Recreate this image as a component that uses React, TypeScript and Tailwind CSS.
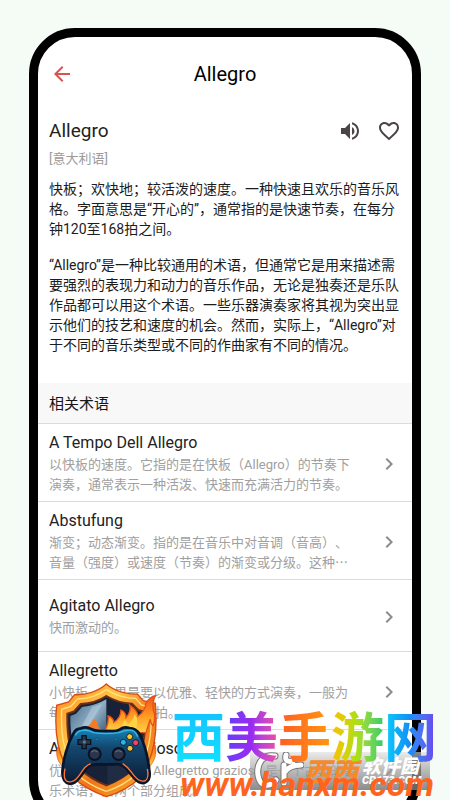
import React from "react";
import { MdArrowBack, MdChevronRight, MdFavoriteBorder, MdVolumeUp } from "react-icons/md";

type Term = { title: string; description: string };

const terms: Term[] = [
  { title: "A Tempo Dell Allegro", description: "以快板的速度。它指的是在快板（Allegro）的节奏下演奏，通常表示一种活泼、快速而充满活力的节奏。" },
  { title: "Abstufung", description: "渐变；动态渐变。指的是在音乐中对音调（音高）、音量（强度）或速度（节奏）的渐变或分级。这种⋯" },
  { title: "Agitato Allegro", description: "快而激动的。" },
  { title: "Allegretto", description: "小快板，这里是要以优雅、轻快的方式演奏，一般为每分钟约 112-120 拍。" },
  { title: "Allegretto grazioso", description: "优雅的稍小快板。Allegretto grazioso 是一个古典的音乐术语，由两个部分组成。" },
];

function TermRow({ title, description }: Term) {
  return (
    <li className="border-b border-[#dcdcdc]">
      <button type="button" className="flex min-h-[71px] w-full items-center justify-between pt-[9px] pr-[11px] pb-[6px] pl-[11px] text-left">
        <span className="flex w-[310px] flex-col gap-[2px]">
          <span className="text-base leading-5 text-[#222]">{title}</span>
          <span className="line-clamp-2 text-[13px] leading-5 text-[#a0a0a0]">{description}</span>
        </span>
        <MdChevronRight className="size-6 shrink-0 text-[#8c8c8c]" />
      </button>
    </li>
  );
}

function ShieldLogo() {
  return (
    <svg viewBox="0 0 348 360" className="h-[120px] w-[116px] shrink-0" aria-hidden="true">
      <defs>
        <linearGradient id="rim" x1="0" y1="0" x2="1" y2="1">
          <stop offset="0" stopColor="#ff8a1c" />
          <stop offset=".35" stopColor="#ffc64a" />
          <stop offset=".6" stopColor="#f0711a" />
          <stop offset="1" stopColor="#ffb52e" />
        </linearGradient>
        <linearGradient id="steel" x1="0" y1="0" x2="1" y2="1">
          <stop offset="0" stopColor="#456887" />
          <stop offset=".5" stopColor="#8eb0c5" />
          <stop offset="1" stopColor="#20344c" />
        </linearGradient>
        <linearGradient id="pad" x1="0" y1="0" x2="0" y2="1">
          <stop offset="0" stopColor="#1688bd" />
          <stop offset=".35" stopColor="#14476f" />
          <stop offset="1" stopColor="#0b1b34" />
        </linearGradient>
        <linearGradient id="flame" x1="0" y1="0" x2="0" y2="1">
          <stop offset="0" stopColor="#f0511b" />
          <stop offset=".55" stopColor="#ff9a20" />
          <stop offset="1" stopColor="#ffd34a" />
        </linearGradient>
      </defs>
      <path d="M38 190 C20 205 22 240 46 262 L66 230Z M312 180 C328 200 330 235 300 265 L286 230Z" fill="url(#flame)" stroke="#df4714" strokeWidth="2" />
      <path d="M175 12 C200 35 244 44 268 42 L286 62 L322 70 C330 160 318 235 276 294 Q235 332 175 350 Q112 328 75 292 C30 235 18 155 26 76 L62 66 L80 44 C112 46 152 34 175 12Z" fill="url(#rim)" stroke="#d64c13" strokeWidth="4" />
      <path d="M175 29 C202 47 240 56 263 55 L280 75 L309 82 C313 165 302 225 265 281 Q230 316 175 334 Q121 315 86 281 C46 225 38 160 41 88 L69 79 L88 57 C118 57 151 46 175 29Z" fill="none" stroke="#ffe27c" strokeWidth="4" />
      <path d="M175 48 C203 65 233 70 252 71 L272 91 L292 96 C295 165 285 220 253 269 Q223 297 175 316 Q128 298 99 269 C62 221 57 165 58 101 L78 94 L98 72 C121 71 148 66 175 48Z" fill="#172238" stroke="#6f3017" strokeWidth="6" />
      <path d="M175 58 C148 74 123 79 102 81 L84 101 L67 108 Q66 158 78 205 L175 205Z" fill="url(#steel)" />
      <path d="M132 80 L162 72 L98 180 L80 180Z" fill="#d4e6ef" opacity=".35" />
      <path d="M178 316 V240 H270 Q260 282 178 316Z" fill="#202b44" />
      <path d="M172 150 Q183 127 180 108 Q197 113 197 127 Q218 115 219 90 Q235 98 234 113 Q251 94 245 75 Q269 91 270 109 Q292 93 294 69 Q306 50 322 47 Q312 67 316 91 Q325 110 315 137 Q307 130 307 118 Q300 137 294 158 L260 158Z" fill="url(#flame)" stroke="#e6501b" strokeWidth="4" />
      <path d="M207 151 Q225 140 227 121 Q239 123 239 135 Q257 118 260 102 Q276 124 261 151Z" fill="#ffd344" />
      <path d="M109 143 Q132 137 135 118 Q151 122 150 137 L156 147Z" fill="#f67a24" />
      <path d="M99 145 Q83 145 76 161 C58 193 45 240 43 276 Q43 307 64 311 Q80 313 94 294 L119 261 Q133 251 154 253 H198 Q221 250 235 266 L257 293 Q276 315 293 307 Q309 300 304 270 C299 229 288 187 274 162 Q264 144 244 144 Q228 139 216 148 Q204 154 190 153 H155 Q139 153 127 146 Q112 139 99 145Z" fill="url(#pad)" stroke="#08152b" strokeWidth="8" />
      <path d="M51 266 Q42 310 70 305 Q84 302 98 280 Q112 257 128 251 M224 251 Q240 261 253 280 Q273 309 292 302 Q304 293 298 267" fill="none" stroke="#ff763a" strokeWidth="4" />
      <path d="M82 166 Q90 151 106 151 Q121 149 137 158 Q173 164 213 158 Q235 148 252 151 Q263 155 269 170" fill="none" stroke="#38b8e5" strokeWidth="4" />
      <path d="M102 167 H115 V179 H128 V193 H115 V206 H102 V193 H90 V179 H102Z" fill="#26384c" stroke="#071322" strokeWidth="4" />
      <circle cx="109" cy="186" r="5" fill="#60748a" />
      <circle cx="140" cy="222" r="18" fill="#2b354c" stroke="#071323" strokeWidth="6" />
      <circle cx="212" cy="222" r="18" fill="#2b354c" stroke="#071323" strokeWidth="6" />
      <path d="M130 216 Q139 207 149 216 M202 216 Q211 207 221 216" fill="none" stroke="#69778a" strokeWidth="3" />
      <g stroke="#102133" strokeWidth="3">
        <circle cx="245" cy="170" r="9" fill="#ffc925" />
        <circle cx="263" cy="188" r="9" fill="#fb3f69" />
        <circle cx="246" cy="205" r="9" fill="#efc239" />
        <circle cx="226" cy="187" r="9" fill="#22b8ed" />
      </g>
      <circle cx="147" cy="178" r="4" fill="#1687b5" stroke="#08263f" />
      <circle cx="205" cy="178" r="4" fill="#1687b5" stroke="#08263f" />
    </svg>
  );
}

function SiteBadge() {
  return (
    <div className="absolute top-[752px] left-[250px] flex h-[38px] w-[180px] items-center bg-linear-to-b from-[#dddddd]/60 to-[#777777]/85 font-['Noto_Sans_CJK_SC',sans-serif] font-black text-white">
      <svg viewBox="0 0 54 38" className="h-[38px] w-[54px] shrink-0" aria-hidden="true">
        <g fill="none" strokeLinecap="round" strokeLinejoin="round">
          <path d="M25 4 C4 0 4 31 15 33 Q22 34 26 28 M34 31 V13 M34 21 Q39 13 51 13 M36 3 Q34 11 43 9" stroke="#777" strokeWidth="7" />
          <path d="M25 4 C4 0 4 31 15 33 Q22 34 26 28 M34 31 V13 M34 21 Q39 13 51 13 M36 3 Q34 11 43 9" stroke="#fff" strokeWidth="5" />
        </g>
      </svg>
      <span className="text-[27px] leading-[38px] text-[#f58a2c] italic">西西</span>
      <span className="ml-1 flex flex-col">
        <span className="text-[19px] leading-5 italic">软件园</span>
        <span className="font-[Roboto,sans-serif] text-[11px] leading-3 italic">CR173.COM</span>
      </span>
    </div>
  );
}

function SiteOverlay() {
  return (
    <aside className="pointer-events-none absolute inset-0">
      <SiteBadge />
      <div className="absolute top-[680px] left-12">
        <ShieldLogo />
      </div>
      <p className="absolute top-[704px] left-[172px] flex font-['Noto_Sans_CJK_SC',sans-serif] text-[53px] leading-[60px] font-bold text-transparent">
        <span className="bg-linear-to-b from-[#14bfff] to-[#12e1ff] bg-clip-text">西</span>
        <span className="bg-linear-to-r from-[#633bfa] via-[#9a2af0] to-[#f24aa0] bg-clip-text">美</span>
        <span className="bg-linear-to-r from-[#ff5b22] to-[#ff970b] bg-clip-text">手</span>
        <span className="bg-linear-to-r from-[#ffbd00] via-[#a8df16] to-[#20cb6c] bg-clip-text">游</span>
        <span className="bg-linear-to-r from-[#10cdfa] via-[#168cf5] to-[#6842ed] bg-clip-text">网</span>
      </p>
      <p className="absolute top-[764px] left-[180px] font-[Roboto,sans-serif] text-[34px] leading-10 font-bold whitespace-nowrap text-[#ff641f] italic">
        www.hanxm.com
      </p>
    </aside>
  );
}

export default function App() {
  return (
    <div className="relative h-screen overflow-hidden bg-[#f5fcf5] font-[Roboto,'Noto_Sans_CJK_SC',sans-serif] [text-spacing-trim:space-all]" lang="zh-CN">
      <main className="mx-[29px] mt-7 h-[calc(100vh-2px)] overflow-hidden rounded-[46px] border-[9px] border-black bg-white">
        <header className="grid h-[74px] grid-cols-[48px_1fr_48px] items-center">
          <button type="button" aria-label="返回" className="flex size-12 items-center justify-center text-[#d9534f]">
            <MdArrowBack className="size-6" />
          </button>
          <h1 className="text-center text-xl leading-6 text-black">Allegro</h1>
        </header>
        <article className="pr-[11px] pl-[11px] text-sm leading-5 text-[#1c1c1c]">
          <div className="flex h-10 items-center justify-between">
            <h2 className="text-[19px] leading-6 text-[#222]">Allegro</h2>
            <div className="flex gap-[15px] text-[#4b4446]">
              <button type="button" aria-label="播放">
                <MdVolumeUp className="size-6" />
              </button>
              <button type="button" aria-label="收藏">
                <MdFavoriteBorder className="size-6" />
              </button>
            </div>
          </div>
          <p className="mt-[-2px] text-[13px] text-[#9b9b9b]">[意大利语]</p>
          <p className="mt-[10px]">快板；欢快地；较活泼的速度。一种快速且欢乐的音乐风格。字面意思是“开心的”，通常指的是快速节奏，在每分钟120至168拍之间。</p>
          <p className="mt-4">“Allegro”是一种比较通用的术语，但通常它是用来描述需要强烈的表现力和动力的音乐作品，无论是独奏还是乐队作品都可以用这个术语。一些乐器演奏家将其视为突出显示他们的技艺和速度的机会。然而，实际上，“Allegro”对于不同的音乐类型或不同的作曲家有不同的情况。</p>
        </article>
        <section className="mt-7">
          <h2 className="border-b border-[#dcdcdc] bg-[#f8f8f8] px-[11px] pt-[10px] pb-[8px] text-[15px] leading-[22px] text-[#161616]">相关术语</h2>
          <ul>
            {terms.map((term) => (
              <TermRow key={term.title} {...term} />
            ))}
          </ul>
        </section>
      </main>
      <SiteOverlay />
    </div>
  );
}
